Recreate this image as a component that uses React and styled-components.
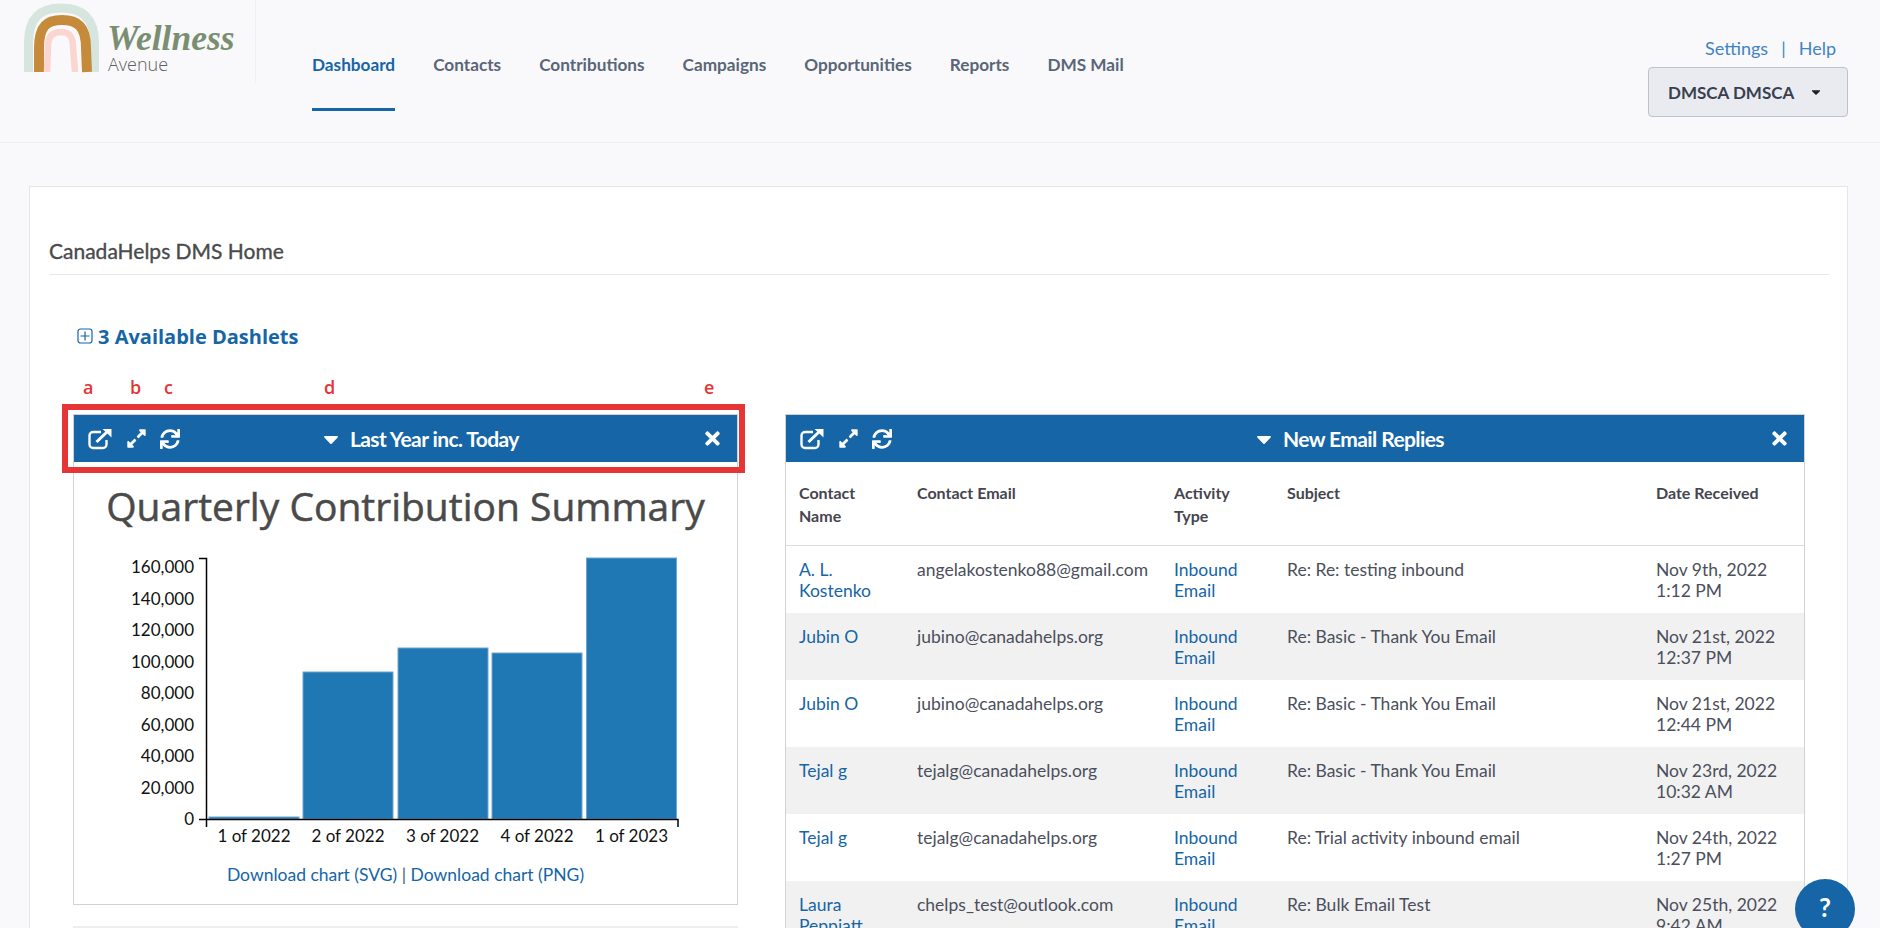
import React from 'react';
import styled, { createGlobalStyle } from 'styled-components';
import { FaExpandAlt, FaSync, FaTimes, FaCaretDown } from 'react-icons/fa';

const GlobalStyle = createGlobalStyle`
  html, body {
    margin: 0;
    padding: 0;
    height: 100%;
    overflow: hidden;
    background: #f9f9fb;
    font-family: Lato, 'Liberation Sans', sans-serif;
  }
  * { box-sizing: border-box; }
`;

const Header = styled.header`
  height: 143px;
  display: flex;
  align-items: flex-start;
  border-bottom: 1px solid #eeeef1;
  padding-right: 32px;
`;

const LogoBlock = styled.div`
  width: 256px;
  height: 83px;
  flex: none;
  position: relative;
  border-right: 1px solid #f0f0f3;
`;

const LogoMark = styled.svg`
  position: absolute;
  left: 20px;
  top: 0;
`;

const LogoScript = styled.span`
  position: absolute;
  left: 107px;
  top: 21px;
  font-family: 'Liberation Serif', serif;
  font-style: italic;
  font-weight: 700;
  font-size: 35.5px;
  line-height: 34px;
  color: #7a8f72;
`;

const LogoSub = styled.span`
  position: absolute;
  left: 108px;
  top: 55px;
  font-family: 'Open Sans', sans-serif;
  font-size: 18px;
  font-weight: 300;
  line-height: 18px;
  color: #5f5f5f;
`;

const Nav = styled.nav`
  display: flex;
  gap: 38px;
  margin-left: 56px;
`;

const NavItem = styled.a`
  display: block;
  height: 111px;
  padding-top: 55px;
  font-size: 17.2px;
  line-height: 20px;
  font-weight: 700;
  color: ${p => (p.$active ? '#1565a7' : '#5a6678')};
  border-bottom: 3px solid ${p => (p.$active ? '#1565a7' : 'transparent')};
`;

const UserBlock = styled.div`
  margin-left: auto;
  display: flex;
  flex-direction: column;
  align-items: flex-end;
  padding-top: 37px;
`;

const TopLinks = styled.div`
  display: flex;
  align-items: center;
  gap: 13px;
  height: 22px;
  padding-right: 12px;
  font-size: 18px;
  color: #3f84c4;
`;

const UserButton = styled.button`
  margin-top: 8px;
  width: 200px;
  height: 50px;
  display: flex;
  align-items: center;
  gap: 15px;
  padding: 0 0 0 19px;
  background: #e9ebf0;
  border: 1px solid #bcc2cf;
  border-radius: 4px;
  font-family: inherit;
  font-size: 17px;
  font-weight: 700;
  color: #3a3f4f;
`;

const Card = styled.main`
  margin: 43px 32px 0 29px;
  background: #fff;
  border: 1px solid #e6e6e8;
  padding: 0 18px 0 19px;
  height: 900px;
`;

const PageTitle = styled.h1`
  margin: 0;
  padding-top: 52px;
  height: 88px;
  border-bottom: 1px solid #e8e8e8;
  font-size: 21px;
  line-height: 24px;
  font-weight: 400;
  -webkit-text-stroke: 0.35px #4a4a4a;
  color: #4a4a4a;
`;

const AddDashlets = styled.a`
  display: flex;
  align-items: center;
  gap: 5px;
  margin: 49px 0 0 28px;
  height: 24px;
  font-family: 'Open Sans', sans-serif;
  font-size: 20px;
  font-weight: 700;
  color: #1565a7;
`;

const Columns = styled.div`
  position: relative;
  display: flex;
  align-items: flex-start;
  gap: 47px;
  margin-top: 66px;
  padding-left: 24px;
`;

const Marker = styled.span`
  position: absolute;
  left: ${p => p.$x}px;
  top: -37px;
  font-family: 'Open Sans', sans-serif;
  font-size: 18px;
  font-weight: 600;
  line-height: 20px;
  color: #e53535;
`;

const RedBox = styled.div`
  position: absolute;
  left: 13px;
  top: -10px;
  width: 683px;
  height: 69px;
  border: 6px solid #e53535;
  pointer-events: none;
`;

const LeftColumn = styled.div`
  width: 665px;
  flex: none;
`;

const Panel = styled.section`
  border: 1px solid #d2d2d2;
  background: #fff;
`;

const NextPanel = styled.div`
  margin-top: 21px;
  height: 40px;
  border-top: 2px solid #eeeeee;
`;

const RightPanel = styled(Panel)`
  width: 1020px;
  flex: none;
`;

const PanelBar = styled.div`
  height: 47px;
  display: flex;
  align-items: center;
  background: #1565a7;
  color: #fff;
  padding: 0 ${p => p.$right}px 0 14px;
`;

const BarIcons = styled.div`
  display: flex;
  align-items: center;
  gap: 13px;
  width: ${p => p.$w}px;
  flex: none;
`;

const BarTitle = styled.div`
  flex: 1;
  display: flex;
  align-items: center;
  gap: 7px;
  font-size: 21px;
  font-weight: 700;
  letter-spacing: -0.6px;
  padding-left: ${p => p.$pad}px;
`;

const ChartTitle = styled.h2`
  margin: 0;
  padding-top: 20px;
  height: 88px;
  text-align: center;
  font-family: 'Open Sans', sans-serif;
  font-size: 39px;
  line-height: 48px;
  font-weight: 400;
  -webkit-text-stroke: 0.5px #4a4a4a;
  color: #4a4a4a;
`;

const ChartSvg = styled.svg`
  display: block;
  text {
    font-family: Lato, sans-serif;
    font-size: 17px;
    fill: #111;
  }
`;

const DownloadRow = styled.div`
  height: 54px;
  padding-top: 15px;
  text-align: center;
  font-size: 17.5px;
  line-height: 20px;
  color: #3f5a7a;
`;

const TextLink = styled.a`
  color: #1565a7;
`;

const Table = styled.table`
  width: 1018px;
  table-layout: fixed;
  border-collapse: collapse;
  font-size: 17.5px;
  line-height: 21px;
  color: #4b4f5c;

  th {
    padding: 19px 13px 18px;
    text-align: left;
    vertical-align: top;
    font-size: 16px;
    line-height: 23px;
    font-weight: 700;
    color: #45454f;
    border-bottom: 1px solid #dcdcdc;
  }

  td {
    height: 67px;
    padding: 13px 13px 12px;
    vertical-align: top;
  }

  tbody tr:nth-child(even) td {
    background: #f1f1f1;
  }
`;

const HelpButton = styled.button`
  position: fixed;
  left: 1795px;
  top: 879px;
  width: 60px;
  height: 60px;
  border: none;
  border-radius: 50%;
  padding: 0 0 4px;
  background: #1565a7;
  color: #fff;
  font-family: inherit;
  font-size: 26px;
  font-weight: 700;
`;

const ExternalIcon = () => (
  <svg width="25" height="22" viewBox="0 0 25 22" fill="none" stroke="#fff">
    <path d="M13 4H5a3.5 3.5 0 0 0-3.5 3.5v9A3.5 3.5 0 0 0 5 20h10a3.5 3.5 0 0 0 3.5-3.5V12" strokeWidth="2.4" />
    <path d="M8.5 14 L20 3" strokeWidth="3" />
    <path d="M14.5 1h9v8.5z" fill="#fff" stroke="none" />
  </svg>
);

const PlusBox = () => (
  <svg width="16" height="16" viewBox="0 0 16 16" fill="none" stroke="#1565a7" strokeWidth="1.2">
    <rect x="1" y="1" width="14" height="14" rx="2.5" />
    <path d="M8 3.500v9M3.500 8h9" />
  </svg>
);

const Logo = () => (
  <LogoBlock>
    <LogoMark width="84" height="76" viewBox="20 0 84 76" fill="none">
      <path d="M28.5 72V43C28.5 16 42 8 61 8s33.500 8 33.500 35v29" stroke="#d6e6df" strokeWidth="9" />
      <path d="M39 72V48C39 26 47 20 62 20s24 6 24 28l1 24" stroke="#c68b3a" strokeWidth="10" />
      <path d="M47 72l1-25c0-12 6-15 13-15s12 3 12 15l2 25" stroke="#fbd5cf" strokeWidth="6.500" />
    </LogoMark>
    <LogoScript>Wellness</LogoScript>
    <LogoSub>Avenue</LogoSub>
  </LogoBlock>
);

const bars = [
  { x: 209, top: 817 },
  { x: 303, top: 672 },
  { x: 398, top: 648 },
  { x: 492, top: 653 },
  { x: 586.5, top: 558 },
];

const yTicks = ['0', '20,000', '40,000', '60,000', '80,000', '100,000', '120,000', '140,000', '160,000'];
const xTicks = [
  { c: 254, t: '1 of 2022' },
  { c: 348, t: '2 of 2022' },
  { c: 442.5, t: '3 of 2022' },
  { c: 537, t: '4 of 2022' },
  { c: 631.5, t: '1 of 2023' },
];

// svg coordinates follow the page, so the viewBox starts where the chart sits
const Chart = () => (
  <ChartSvg width="663" height="300" viewBox="74 550 663 300">
    {bars.map(b => (
      <rect key={b.x} x={b.x} y={b.top} width="90" height={819 - b.top} fill="#1f77b4" stroke="#6ea6cf" strokeWidth="1" />
    ))}
    <path d="M199 558.500H206.500V827M199 819.500H678V827" fill="none" stroke="#000" strokeWidth="1.500" />
    {yTicks.map((t, i) => (
      <text key={t} x="194" y={825 - i * 31.5} textAnchor="end">{t}</text>
    ))}
    {xTicks.map(t => (
      <text key={t.t + t.c} x={t.c} y="842" textAnchor="middle">{t.t}</text>
    ))}
  </ChartSvg>
);

const rows = [
  ['A. L.', 'Kostenko', 'angelakostenko88@gmail.com', 'Re: Re: testing inbound', 'Nov 9th, 2022', '1:12 PM'],
  ['Jubin O', '', 'jubino@canadahelps.org', 'Re: Basic - Thank You Email', 'Nov 21st, 2022', '12:37 PM'],
  ['Jubin O', '', 'jubino@canadahelps.org', 'Re: Basic - Thank You Email', 'Nov 21st, 2022', '12:44 PM'],
  ['Tejal g', '', 'tejalg@canadahelps.org', 'Re: Basic - Thank You Email', 'Nov 23rd, 2022', '10:32 AM'],
  ['Tejal g', '', 'tejalg@canadahelps.org', 'Re: Trial activity inbound email', 'Nov 24th, 2022', '1:27 PM'],
  ['Laura', 'Peppiatt', 'chelps_test@outlook.com', 'Re: Bulk Email Test', 'Nov 25th, 2022', '9:42 AM'],
];

const BarTools = () => (
  <>
    <ExternalIcon />
    <FaExpandAlt size={21} />
    <FaSync size={20} />
  </>
);

const navItems = ['Contacts', 'Contributions', 'Campaigns', 'Opportunities', 'Reports', 'DMS Mail'];

const App = () => (
  <>
    <GlobalStyle />
    <Header>
      <Logo />
      <Nav>
        <NavItem $active>Dashboard</NavItem>
        {navItems.map(n => <NavItem key={n}>{n}</NavItem>)}
      </Nav>
      <UserBlock>
        <TopLinks>
          <span>Settings</span>
          <span>|</span>
          <span>Help</span>
        </TopLinks>
        <UserButton>
          DMSCA DMSCA
          <FaCaretDown size={14} color="#222" />
        </UserButton>
      </UserBlock>
    </Header>

    <Card>
      <PageTitle>CanadaHelps DMS Home</PageTitle>
      <AddDashlets><PlusBox />3 Available Dashlets</AddDashlets>
      <Columns>
        <Marker $x={34}>a</Marker>
        <Marker $x={81}>b</Marker>
        <Marker $x={115}>c</Marker>
        <Marker $x={275}>d</Marker>
        <Marker $x={655}>e</Marker>
        <RedBox />
        <LeftColumn>
          <Panel>
            <PanelBar $right={14}>
              <BarIcons $w={196}><BarTools /></BarIcons>
              <BarTitle $pad={35}><FaCaretDown size={24} />Last Year inc. Today</BarTitle>
              <FaTimes size={21} />
            </PanelBar>
            <ChartTitle>Quarterly Contribution Summary</ChartTitle>
            <Chart />
            <DownloadRow>
              <TextLink>Download chart (SVG)</TextLink> | <TextLink>Download chart (PNG)</TextLink>
            </DownloadRow>
          </Panel>
          <NextPanel />
        </LeftColumn>
        <RightPanel>
          <PanelBar $right={14}>
            <BarIcons $w={300}><BarTools /></BarIcons>
            <BarTitle $pad={152}><FaCaretDown size={24} />New Email Replies</BarTitle>
            <FaTimes size={21} />
          </PanelBar>
          <Table>
            <colgroup>
              <col width="118" />
              <col width="257" />
              <col width="113" />
              <col width="369" />
              <col width="161" />
            </colgroup>
            <thead>
              <tr>
                <th>Contact Name</th>
                <th>Contact Email</th>
                <th>Activity Type</th>
                <th>Subject</th>
                <th>Date Received</th>
              </tr>
            </thead>
            <tbody>
              {rows.map((r, i) => (
                <tr key={i}>
                  <td><TextLink>{r[0]}<br />{r[1]}</TextLink></td>
                  <td>{r[2]}</td>
                  <td><TextLink>Inbound<br />Email</TextLink></td>
                  <td>{r[3]}</td>
                  <td>{r[4]}<br />{r[5]}</td>
                </tr>
              ))}
            </tbody>
          </Table>
        </RightPanel>
      </Columns>
    </Card>
    <HelpButton>?</HelpButton>
  </>
);

export default App;
